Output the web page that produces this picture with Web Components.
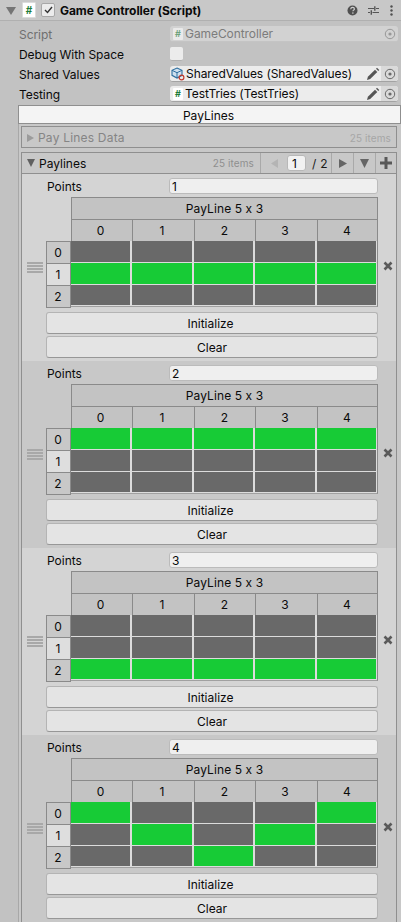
<!DOCTYPE html>
<html>
<head>
<meta charset="utf-8">
<style>
html,body{margin:0;padding:0;height:922px;overflow:hidden;background:#c2c2c2;font-family:Inter,"Liberation Sans",sans-serif;font-size:12px;color:#0a0a0a}
</style>
</head>
<body>
<inspector-panel></inspector-panel>
<script>
const scriptIcon = (op) => `<span class="doc" style="opacity:${op||1}">#</span>`;
const docStyle = `.doc{display:inline-flex;align-items:center;justify-content:center;width:10px;height:12px;background:#fff;border-radius:1px;color:#1e7d3a;font:700 9px Inter,"Liberation Sans",sans-serif;flex:none}`;
const targetIcon = `<svg width="12" height="12" viewBox="0 0 12 12"><circle cx="6" cy="6" r="4.7" fill="none" stroke="#6a6a6a" stroke-width="1"/><circle cx="6" cy="6" r="1.6" fill="#6a6a6a"/></svg>`;
const pencilIcon = `<svg width="14" height="14" viewBox="0 0 14 14"><path d="M1 13l.9-3.2L9 2.7l2.3 2.3-7.1 7.1z" fill="#555"/><path d="M10 1.7l1-1 2.3 2.3-1 1z" fill="#555"/></svg>`;

class InspectorHeader extends HTMLElement {
  constructor(){
    super();
    this.attachShadow({mode:'open'}).innerHTML = `
    <style>
      :host{display:flex;align-items:center;height:20px;background:#c8c8c8;border-bottom:1px solid #b0b0b0;padding-left:6px;padding-right:8px}
      ${docStyle}
      .tri{width:0;height:0;border-left:5px solid transparent;border-right:5px solid transparent;border-top:8px solid #757575;margin-right:6px;margin-top:1px}
      .doc{margin-right:5px;width:12px;height:14px;border:1px solid #dcdcdc;font-size:10px}
      .check{width:12px;height:12px;background:#ececec;border:1px solid #a8a8a8;border-radius:2px;margin-right:5px;display:flex;align-items:center;justify-content:center}
      .title{font-weight:700;font-size:12px;flex:1;color:#0a0a0a;letter-spacing:-.05px}
      .tools{display:flex;align-items:center;gap:10px}
    </style>
    <span class="tri"></span>${scriptIcon()}
    <span class="check"><svg width="9" height="8" viewBox="0 0 9 8"><path d="M1 4l2.5 2.5L8 1" fill="none" stroke="#333" stroke-width="1.4"/></svg></span>
    <span class="title">Game Controller (Script)</span>
    <span class="tools">
      <svg width="11" height="11" viewBox="0 0 11 11"><circle cx="5.5" cy="5.5" r="5" fill="#505050"/><path d="M3.7 4.2c.1-1.2 1-1.8 1.9-1.8 1.1 0 1.8.7 1.8 1.5 0 1.2-1.5 1.2-1.5 2.3" fill="none" stroke="#d0d0d0" stroke-width="1.2"/><rect x="5.2" y="7.4" width="1.3" height="1.3" fill="#d0d0d0"/></svg>
      <svg width="11" height="11" viewBox="0 0 11 11"><path d="M0 3.5h6M8 3.5h3M0 7.5h2M4.5 7.5h6.5" stroke="#555" stroke-width="1"/><path d="M6.8 1.2v4.6M3.3 5.2v4.6" stroke="#555" stroke-width="1.4"/></svg>
      <svg width="3" height="11" viewBox="0 0 3 11" style="margin-left:1px"><circle cx="1.5" cy="1.5" r="1.2" fill="#505050"/><circle cx="1.5" cy="5.5" r="1.2" fill="#505050"/><circle cx="1.5" cy="9.5" r="1.2" fill="#505050"/></svg>
    </span>`;
  }
}
customElements.define('inspector-header', InspectorHeader);

class PropField extends HTMLElement {
  constructor(){
    super();
    const label = this.getAttribute('label');
    const kind = this.getAttribute('kind');
    const value = this.getAttribute('value') || '';
    let field = '';
    if(kind==='disabled'){
      field = `<div class="obj off">${scriptIcon(.55)}<span class="val">${value}</span><span class="pick">${targetIcon}</span></div>`;
    } else if(kind==='check'){
      field = `<div class="box"></div>`;
    } else {
      const ic = kind==='so'
        ? `<svg class="cube" width="14" height="14" viewBox="0 0 14 14"><path d="M6 1l5 2.3v5L6 11 1 8.3v-5z" fill="#cfe0ef" stroke="#2f6f9f" stroke-width="1.1"/><path d="M1 3.3l5 2.4 5-2.4M6 5.7V11" fill="none" stroke="#2f6f9f" stroke-width="1"/><circle cx="10.5" cy="10.5" r="2.4" fill="none" stroke="#c0392b" stroke-width="1.2"/></svg>`
        : scriptIcon();
      field = `<div class="obj">${ic}<span class="val">${value}</span><span class="pen">${pencilIcon}</span><span class="pick on">${targetIcon}</span></div>`;
    }
    this.attachShadow({mode:'open'}).innerHTML = `
    <style>
      :host{display:flex;align-items:center;height:16px;margin-bottom:4px;padding-left:19px;padding-right:3px}
      ${docStyle}
      .lab{width:151px;flex:none;font-size:12px;white-space:nowrap;letter-spacing:-.05px}
      :host([kind=disabled]) .lab{color:#6f6f6f}
      .obj{flex:1;display:flex;align-items:center;height:16px;background:#ececec;border-radius:3px;border-bottom:1px solid #a3a3a3;box-sizing:border-box;padding-left:3px;min-width:0}
      .cube{flex:none;margin-left:-2px}
      .obj.off{background:#d2d2d2;border-bottom-color:#c4c4c4;color:#7c7c7c}
      .val{flex:1;white-space:nowrap;padding-left:2px;font-size:12px;letter-spacing:-.07px}
      .cube + .val{padding-left:1px}
      .pen{width:17px;display:flex;justify-content:center}
      .pick{width:17px;height:15px;display:flex;align-items:center;justify-content:center;border-radius:0 3px 3px 0}
      .pick.on{background:#dadada}
      .off svg{opacity:.55}
      .box{width:13px;height:13px;background:#ececec;border-radius:2px;border-bottom:1px solid #b0b0b0}
    </style>
    <span class="lab">${label}</span>${field}`;
  }
}
customElements.define('prop-field', PropField);

class FlatButton extends HTMLElement {
  constructor(){
    super();
    this.attachShadow({mode:'open'}).innerHTML = `
    <style>
      :host{display:flex;align-items:center;justify-content:center;height:22px;background:#e4e4e4;border:1px solid #b4b4b4;border-bottom-color:#979797;border-radius:3px;box-sizing:border-box;font-size:12px}
    </style><slot></slot>`;
  }
}
customElements.define('flat-button', FlatButton);

class FoldBox extends HTMLElement {
  constructor(){
    super();
    this.attachShadow({mode:'open'}).innerHTML = `
    <style>
      :host{display:flex;align-items:center;height:22px;box-sizing:border-box;margin:2px 4px 0 2px;padding-top:1px;background:#c8c8c8;border:1px solid #8f8f8f;padding-left:5px;color:#858585;font-size:12px;letter-spacing:.2px}
      .tri{width:0;height:0;border-top:4.5px solid transparent;border-bottom:4.5px solid transparent;border-left:7px solid #9b9b9b;margin-right:4px}
      .n{margin-left:auto;margin-right:5px;color:#a6a6a6;font-size:10px;letter-spacing:.1px}
    </style>
    <span class="tri"></span><slot></slot><span class="n">25 items</span>`;
  }
}
customElements.define('fold-box', FoldBox);

class ListHeader extends HTMLElement {
  constructor(){
    super();
    this.attachShadow({mode:'open'}).innerHTML = `
    <style>
      :host{display:flex;align-items:center;height:21px;box-sizing:border-box;background:#c8c8c8;border-bottom:1px solid #8f8f8f;padding-left:5px;font-size:12px}
      .tri{width:0;height:0;border-left:4.5px solid transparent;border-right:4.5px solid transparent;border-top:8px solid #606060;margin-right:4px}
      .n{margin-left:auto;margin-right:6px;color:#8f8f8f;font-size:10px;letter-spacing:.1px}
      .c{height:20px;display:flex;align-items:center;justify-content:center;border-left:1px solid #a9a9a9;box-sizing:border-box;flex:none}
      .inp{width:19px;height:16px;background:#f2f2f2;border:1px solid #b8b8b8;border-radius:3px;box-sizing:border-box;font-size:12px;padding-left:4px;line-height:15px;margin-right:6px;flex:none}
      .s{font-size:12px;color:#1a1a1a;letter-spacing:.3px;margin-right:5px;width:14px;white-space:nowrap;flex:none}
    </style>
    <span class="tri"></span><slot></slot><span class="n">25 items</span>
    <span class="c" style="width:27px"><svg width="7" height="9" viewBox="0 0 7 9"><path d="M7 0v9L0 4.5z" fill="#b4b4b4"/></svg></span>
    <span class="inp">1</span><span class="s">/ 2</span>
    <span class="c" style="width:22px"><svg width="8" height="9" viewBox="0 0 8 9"><path d="M0 0v9l8-4.5z" fill="#656565"/></svg></span>
    <span class="c" style="width:22px"><svg width="9" height="9" viewBox="0 0 9 9"><path d="M0 0h9L4.5 9z" fill="#656565"/></svg></span>
    <span class="c" style="width:21px"><svg width="12" height="12" viewBox="0 0 12 12"><path d="M4.5 0h3v4.5H12v3H7.5V12h-3V7.5H0v-3h4.5z" fill="#585858"/></svg></span>
    `;
  }
}
customElements.define('list-header', ListHeader);

class PayGrid extends HTMLElement {
  set data(rows){ this._rows = rows; this.render(); }
  constructor(){
    super();
    this.attachShadow({mode:'open'});
  }
  render(){
    const heads = [0,1,2,3,4].map(i=>`<div class="h c${i}">${i}</div>`).join('');
    const body = this._rows.map((r,y)=>`<div class="rh ${y%2?'w':''}">${y}</div>`+r.map((on,x)=>`<div class="cell ${on?'on':''} ${x===4?'end':''} ${y===2?'low':''}"></div>`).join('')).join('');
    this.shadowRoot.innerHTML = `
    <style>
      :host{display:grid;grid-template-columns:25px 61px 62px 61px 62px 61px;grid-template-rows:repeat(5,22px);width:332px;font-size:12px}
      .title{grid-column:2 / 7;background:#c3c3c3;border:1px solid #8a8a8a;border-bottom:none;display:flex;align-items:center;justify-content:center;box-sizing:border-box;letter-spacing:.1px}
      .h{background:#c3c3c3;border-top:1px solid #8a8a8a;border-left:1px solid #8a8a8a;box-sizing:border-box;display:flex;align-items:center;justify-content:center;padding-right:1px}
      .h.c0,.h.c1,.h.c3{padding-right:3px}
      .h.c4{border-right:1px solid #8a8a8a}
      .rh{background:#c8c8c8;border:1px solid #8a8a8a;box-sizing:border-box;display:flex;align-items:center;justify-content:center;margin-bottom:-1px;padding-right:1px}
      .rh.w{background:#dedede}
      .cell{background:#696969;box-shadow:inset -2px -1px 0 #dcdcdc;box-sizing:border-box}
      .cell.on{background:#17cb36}
      .cell.end{border-right:1px solid #8a8a8a;box-shadow:inset -1px -1px 0 #dcdcdc}
      .cell.low{border-bottom:1px solid #a0a0a0}
    </style>
    <div></div><div class="title">PayLine 5 x 3</div><div></div>${heads}${body}`;
  }
}
customElements.define('pay-grid', PayGrid);

class PayLineItem extends HTMLElement {
  set data(d){ this._d = d; this.render(); }
  constructor(){
    super();
    this.attachShadow({mode:'open'});
  }
  render(){
    this.shadowRoot.innerHTML = `
    <style>
      :host{display:flex;height:187px;box-sizing:border-box;background:${this._d.alt?'#c8c8c8':'#d4d4d4'}}
      .drag{width:24px;display:flex;flex-direction:column;gap:1px;align-items:flex-start;padding-left:5px;box-sizing:border-box;flex:none;align-self:center}
      .drag i{display:block;width:16px;height:2px;background:#a8a8a8}
      .main{width:332px;flex:none;padding-top:4px}
      .pts{display:flex;align-items:center;height:16px;padding-left:1px;margin-bottom:3px}
      .pts span{width:122px;flex:none}
      .pts .in{width:209px;height:16px;background:#efefef;border:1px solid #bbb;border-radius:3px;box-sizing:border-box;padding-left:2px;line-height:15px;flex:none}
      .btns{display:flex;flex-direction:column;gap:2px;margin-top:5px}
      .x{margin-left:5px;flex:none;display:flex;align-self:center;margin-bottom:3px}
    </style>
    <div class="drag"><i></i><i></i><i></i><i></i></div>
    <div class="main">
      <div class="pts"><span>Points</span><div class="in">${this._d.points}</div></div>
      <pay-grid></pay-grid>
      <div class="btns"><flat-button style="padding-right:3px">Initialize</flat-button><flat-button>Clear</flat-button></div>
    </div>
    <span class="x"><svg width="10" height="10" viewBox="0 0 10 10"><path d="M1.5 1.5l7 7M8.5 1.5l-7 7" stroke="#5a5a5a" stroke-width="2.6"/></svg></span>`;
    this.shadowRoot.querySelector('pay-grid').data = this._d.rows;
  }
}
customElements.define('pay-line-item', PayLineItem);

class InspectorPanel extends HTMLElement {
  constructor(){
    super();
    this.attachShadow({mode:'open'});
  }
  connectedCallback(){
    const g = (s)=>s.split('').map(c=>c==='1');
    const items = [
      {points:1,rows:[g('00000'),g('11111'),g('00000')]},
      {points:2,alt:true,rows:[g('11111'),g('00000'),g('00000')]},
      {points:3,rows:[g('00000'),g('00000'),g('11111')]},
      {points:4,alt:true,rows:[g('10001'),g('01010'),g('00100')]},
    ];
    this.shadowRoot.innerHTML = `
    <style>
      :host{display:block;width:401px;height:922px;overflow:hidden;background:#c2c2c2}
      .fields{padding-top:5px}
      .box{margin-left:18px;margin-top:-1px;width:382px;border-left:1px solid #a8a8a8;height:830px;background:#c8c8c8;box-sizing:content-box}
      .pl{display:flex;align-items:center;justify-content:center;height:19px;box-sizing:border-box;margin-left:-1px;padding:1px 2px 0 0;background:#f4f4f4;border:1px solid #8f8f8f}
      .list{margin:4px 4px 0 2px;border:1px solid #8f8f8f;border-bottom:none}
    </style>
    <inspector-header></inspector-header>
    <div class="fields">
      <prop-field label="Script" kind="disabled" value="GameController"></prop-field>
      <prop-field label="Debug With Space" kind="check"></prop-field>
      <prop-field label="Shared Values" kind="so" value="SharedValues (SharedValues)"></prop-field>
      <prop-field label="Testing" kind="ref" value="TestTries (TestTries)"></prop-field>
    </div>
    <div class="box">
      <div class="pl">PayLines</div>
      <fold-box>Pay Lines Data</fold-box>
      <div class="list"><list-header>Paylines</list-header><div id="items"></div></div>
    </div>`;
    const wrap = this.shadowRoot.querySelector('#items');
    items.forEach(d=>{
      const it = document.createElement('pay-line-item');
      it.data = d;
      wrap.appendChild(it);
    });
  }
}
customElements.define('inspector-panel', InspectorPanel);
</script>
</body>
</html>
